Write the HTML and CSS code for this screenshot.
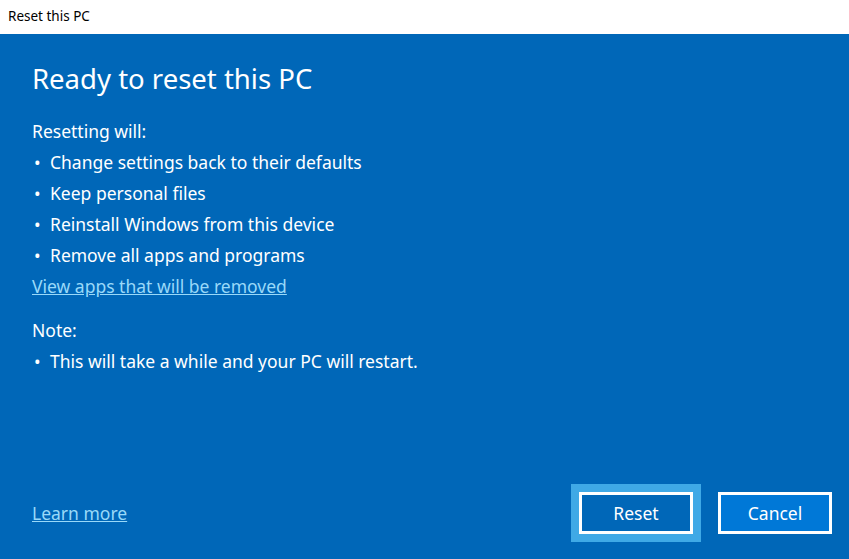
FILE: index.html
```html
<!DOCTYPE html>
<html lang="en">
<head>
  <meta charset="UTF-8">
  <title>Reset this PC</title>
  <link rel="stylesheet" href="styles.css">
</head>
<body>
  <div class="titlebar">Reset this PC</div>

  <div class="dialog">
    <div class="content">
      <h1>Ready to reset this PC</h1>

      <p class="label">Resetting will:</p>
      <ul class="bullets">
        <li>Change settings back to their defaults</li>
        <li>Keep personal files</li>
        <li>Reinstall Windows from this device</li>
        <li>Remove all apps and programs</li>
      </ul>
      <a class="link" href="#">View apps that will be removed</a>

      <p class="label note">Note:</p>
      <ul class="bullets">
        <li>This will take a while and your PC will restart.</li>
      </ul>
    </div>

    <div class="footer">
      <a class="link" href="#">Learn more</a>
      <div class="buttons">
        <button class="btn btn-reset">Reset</button>
        <button class="btn btn-cancel">Cancel</button>
      </div>
    </div>
  </div>
</body>
</html>
```

FILE: styles.css
```css
body {
  margin: 0;
  font-family: "Noto Sans", "Open Sans", sans-serif;
  background: #0067b8;
}
.titlebar {
  height: 34px;
  line-height: 33px;
  padding-left: 8px;
  background: #fff;
  color: #000;
  font-size: 13.5px;
}
.dialog {
  height: 525px;
  box-sizing: border-box;
  padding: 0 17px 25px 32px;
  display: flex;
  flex-direction: column;
  color: #fff;
}
.content {
  flex: 1;
  display: flex;
  flex-direction: column;
  align-items: flex-start;
}
h1 {
  margin: 25px 0 0;
  font-size: 27.5px;
  font-weight: 400;
  line-height: 40px;
}
.label {
  margin: 17px 0 0;
  font-size: 17.5px;
  line-height: 31px;
}
.note {
  margin-top: 13px;
}
.bullets {
  list-style: none;
  margin: 0;
  padding: 0;
  font-size: 17.5px;
  line-height: 31px;
}
.bullets li::before {
  content: "•";
  display: inline-block;
  width: 18px;
  padding-left: 2px;
  box-sizing: border-box;
}
.link {
  color: #99d9f9;
  font-size: 17.5px;
  line-height: 31px;
  text-decoration: underline;
}
.footer {
  display: flex;
  align-items: center;
  justify-content: space-between;
}
.buttons {
  display: flex;
  gap: 25px;
}
.btn {
  width: 114px;
  height: 42px;
  border: 3px solid #fff;
  color: #fff;
  font-family: inherit;
  font-size: 17.5px;
  padding: 0;
}
.btn-reset {
  background: #0067b8;
  box-shadow: 0 0 0 8px #3fa9e6;
}
.btn-cancel {
  background: #0078d7;
}
```
